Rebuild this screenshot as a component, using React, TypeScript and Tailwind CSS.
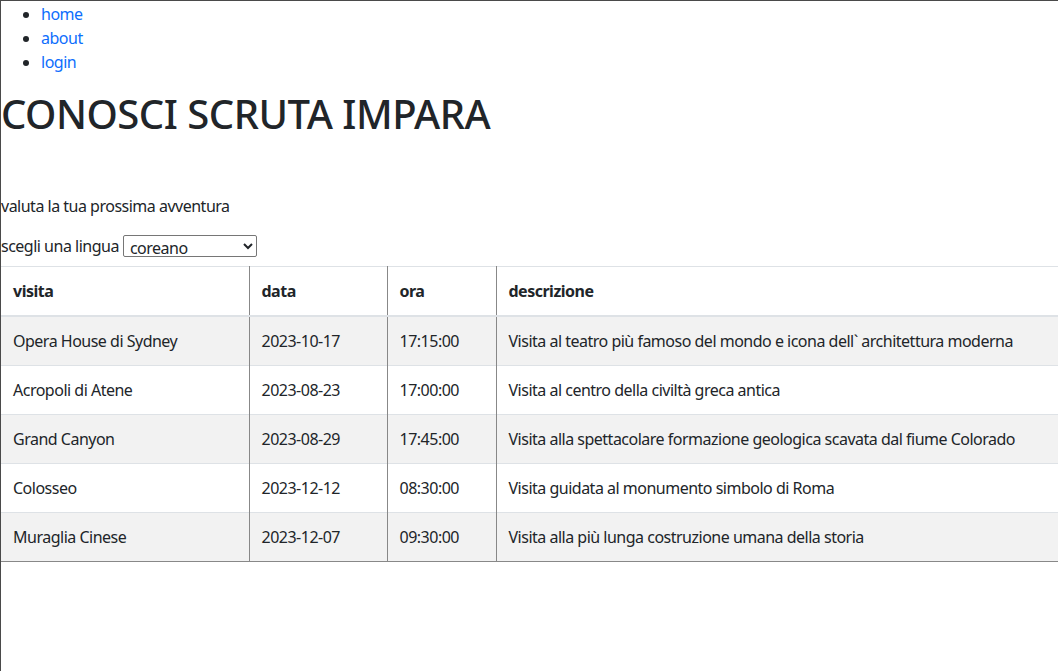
const VISITE = [
  {
    visita: "Opera House di Sydney",
    data: "2023-10-17",
    ora: "17:15:00",
    descrizione: "Visita al teatro più famoso del mondo e icona dell` architettura moderna",
  },
  {
    visita: "Acropoli di Atene",
    data: "2023-08-23",
    ora: "17:00:00",
    descrizione: "Visita al centro della civiltà greca antica",
  },
  {
    visita: "Grand Canyon",
    data: "2023-08-29",
    ora: "17:45:00",
    descrizione: "Visita alla spettacolare formazione geologica scavata dal fiume Colorado",
  },
  {
    visita: "Colosseo",
    data: "2023-12-12",
    ora: "08:30:00",
    descrizione: "Visita guidata al monumento simbolo di Roma",
  },
  {
    visita: "Muraglia Cinese",
    data: "2023-12-07",
    ora: "09:30:00",
    descrizione: "Visita alla più lunga costruzione umana della storia",
  },
];

export default function App() {
  return (
    <div
      className="min-h-[671px] border-t border-l border-[#4a4a4a] bg-white text-[16px] leading-6 tracking-[-0.5px] text-[#212529]"
      style={{ fontFamily: '"Noto Sans", "Open Sans", sans-serif' }}
    >
      <ul className="mb-4 list-disc pl-10 pt-px">
        <li>
          <a href="#" className="text-[#0d6efd]">home</a>
        </li>
        <li>
          <a href="#" className="text-[#0d6efd]">about</a>
        </li>
        <li>
          <a href="#" className="text-[#0d6efd]">login</a>
        </li>
      </ul>

      <h1 className="mb-2 text-[40px] font-medium leading-[48px] tracking-[-0.5px]">CONOSCI SCRUTA IMPARA</h1>

      <p className="mb-4 mt-14">valuta la tua prossima avventura</p>

      <div className="mb-2 flex h-6 items-center gap-1">
        <span>scegli una lingua</span>
        <select
          defaultValue="coreano"
          className="h-[22px] w-[134px] rounded-[2px] border border-[#767676] bg-white px-0.5 text-[16px] leading-5 text-[#212529]"
        >
          <option value="italiano">italiano</option>
          <option value="inglese">inglese</option>
          <option value="coreano">coreano</option>
        </select>
      </div>

      <table className="w-full table-fixed border-collapse border-t border-[#dee2e6] text-left">
        <colgroup>
          <col className="w-[248px]" />
          <col className="w-[138px]" />
          <col className="w-[109px]" />
          <col />
        </colgroup>
        <thead>
          <tr className="border-b-2 border-[#dee2e6]">
            <th className="px-3 py-3 font-bold">visita</th>
            <th className="border-l border-[#888888] px-3 py-3 font-bold">data</th>
            <th className="border-l border-[#888888] px-3 py-3 font-bold">ora</th>
            <th className="border-l border-[#888888] px-3 py-3 font-bold">descrizione</th>
          </tr>
        </thead>
        <tbody>
          {VISITE.map((v, i) => (
            <tr
              key={v.visita}
              className={
                i === VISITE.length - 1
                  ? "border-b border-[#888888] bg-[#f2f2f2]"
                  : i % 2 === 0
                  ? "border-b border-[#dee2e6] bg-[#f2f2f2]"
                  : "border-b border-[#dee2e6] bg-white"
              }
            >
              <td className="px-3 py-3">{v.visita}</td>
              <td className="border-l border-[#888888] px-3 py-3">{v.data}</td>
              <td className="border-l border-[#888888] px-3 py-3">{v.ora}</td>
              <td className="whitespace-nowrap border-l border-[#888888] px-3 py-3">{v.descrizione}</td>
            </tr>
          ))}
        </tbody>
      </table>
    </div>
  );
}
